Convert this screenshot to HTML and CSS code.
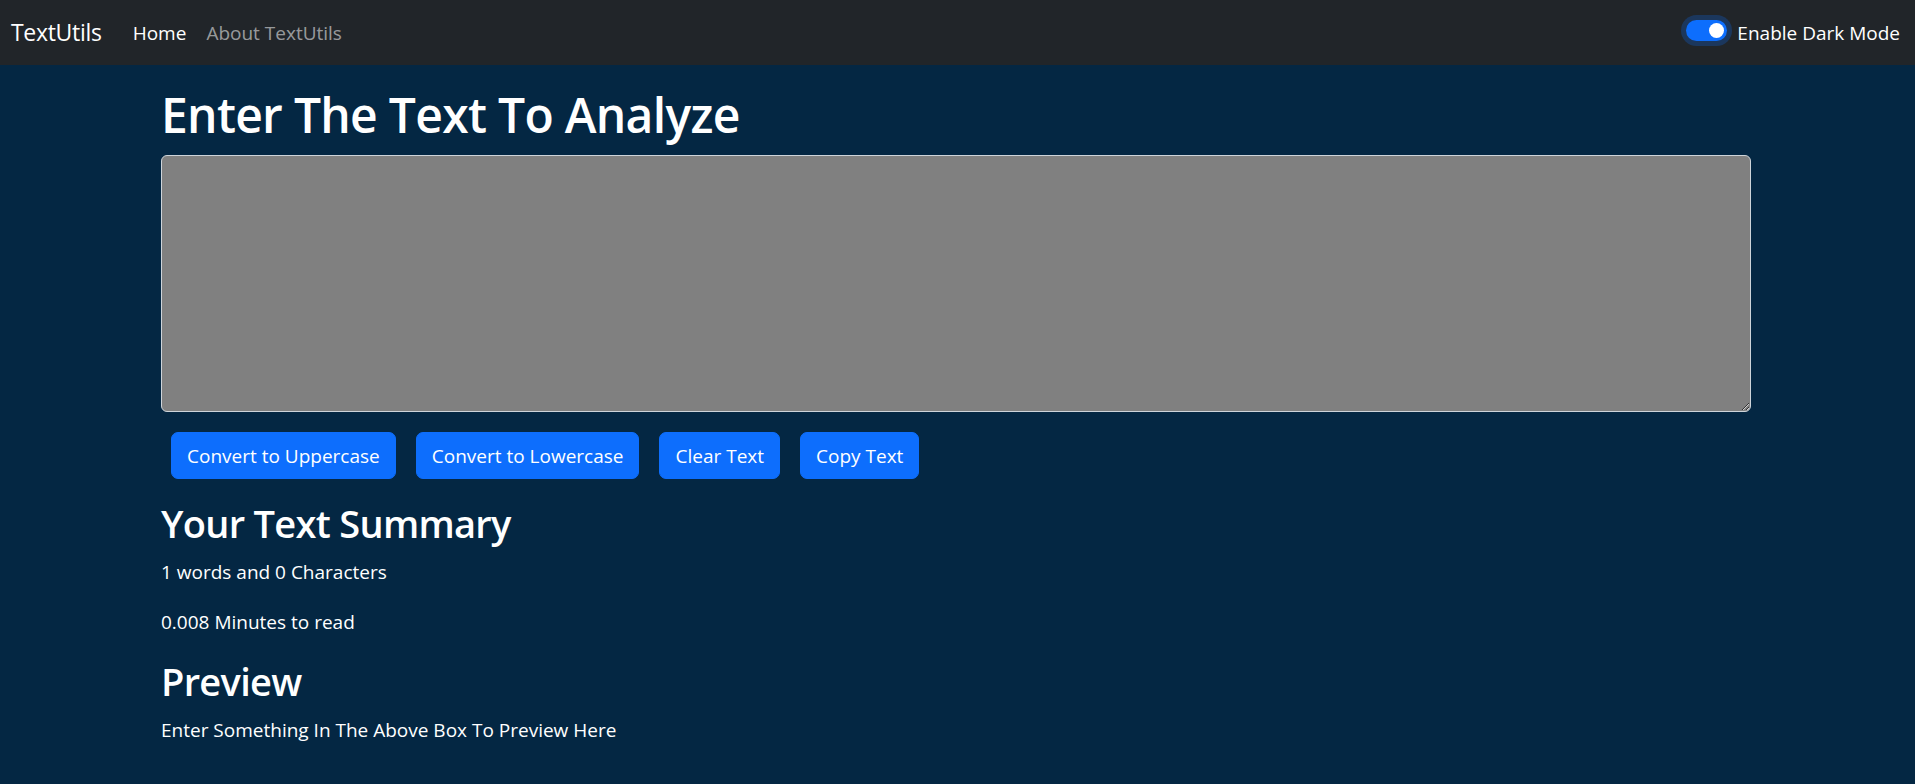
FILE: index.html
```html
<!DOCTYPE html>
<html lang="en">
<head>
<meta charset="utf-8">
<title>TextUtils - Home</title>
<link rel="stylesheet" href="styles.css">
</head>
<body>
<nav class="navbar">
  <div class="nav-left">
    <a class="brand" href="#">TextUtils</a>
    <ul class="nav-links">
      <li><a class="nav-link active" href="#">Home</a></li>
      <li><a class="nav-link" href="#">About TextUtils</a></li>
    </ul>
  </div>
  <div class="switch">
    <span class="switch-track"><span class="switch-knob"></span></span>
    <label class="switch-label">Enable Dark Mode</label>
  </div>
</nav>

<main class="container">
  <h1 class="title">Enter The Text To Analyze</h1>
  <div class="field">
    <textarea class="textbox" rows="8"></textarea>
  </div>
  <div class="actions">
    <button class="btn">Convert to Uppercase</button>
    <button class="btn">Convert to Lowercase</button>
    <button class="btn">Clear Text</button>
    <button class="btn">Copy Text</button>
  </div>
  <section class="summary">
    <h2 class="subtitle">Your Text Summary</h2>
    <p class="line">1 words and 0 Characters</p>
    <p class="line">0.008 Minutes to read</p>
    <h2 class="subtitle">Preview</h2>
    <p class="line">Enter Something In The Above Box To Preview Here</p>
  </section>
</main>
</body>
</html>
```

FILE: styles.css
```css
* { box-sizing: border-box; }

html, body {
  margin: 0;
  padding: 0;
}

body {
  background: #042743;
  color: #ffffff;
  font-family: "Open Sans", "Noto Sans", "Liberation Sans", sans-serif;
  font-size: 19px;
  line-height: 30px;
  min-height: 784px;
}

.navbar {
  height: 65px;
  background: #212529;
  display: flex;
  align-items: center;
  justify-content: space-between;
  padding: 0 15px 0 11px;
}

.nav-left {
  display: flex;
  align-items: center;
}

.brand {
  color: #ffffff;
  text-decoration: none;
  font-size: 23px;
  letter-spacing: -0.3px;
  line-height: 37px;
  margin-right: 21px;
}

.nav-links {
  display: flex;
  list-style: none;
  margin: 0;
  padding: 0;
}

.nav-link {
  display: block;
  padding: 5px 10px;
  color: rgba(255, 255, 255, 0.55);
  text-decoration: none;
  font-size: 19px;
  line-height: 30px;
}

.nav-link.active {
  color: #ffffff;
}

.switch {
  display: flex;
  align-items: center;
  gap: 10px;
}

.switch-track {
  position: relative;
  display: block;
  width: 41px;
  height: 21px;
  border-radius: 11px;
  background: #0d6efd;
  box-shadow: 0 0 0 5px rgba(13, 110, 253, 0.25);
  margin-top: -4px;
}

.switch-knob {
  position: absolute;
  right: 3px;
  top: 3px;
  width: 15px;
  height: 15px;
  border-radius: 50%;
  background: #ffffff;
}

.switch-label {
  font-size: 19px;
  line-height: 30px;
  color: #ffffff;
}

.container {
  padding: 0 164px 0 161px;
  margin-top: 20px;
}

.title {
  margin: 0 0 10px;
  font-size: 48px;
  letter-spacing: -0.7px;
  line-height: 60px;
  font-weight: 600;
}

.field {
  margin-bottom: 20px;
}

.textbox {
  display: block;
  width: 100%;
  height: 257px;
  background: #808080;
  color: #ffffff;
  border: 1px solid #ced4da;
  border-radius: 6px;
  padding: 7px 15px;
  font: inherit;
  resize: vertical;
}

.actions {
  display: flex;
  gap: 20px;
  padding-left: 10px;
}

.btn {
  background: #0d6efd;
  color: #ffffff;
  border: 1px solid #0d6efd;
  border-radius: 7px;
  padding: 7.5px 15px;
  font: inherit;
  font-size: 19px;
  line-height: 30px;
  cursor: pointer;
}

.summary {
  margin-top: 20px;
}

.subtitle {
  margin: 0 0 10px;
  font-size: 38px;
  letter-spacing: -0.7px;
  line-height: 48px;
  font-weight: 600;
}

.line {
  margin: 0 0 20px;
}
```
